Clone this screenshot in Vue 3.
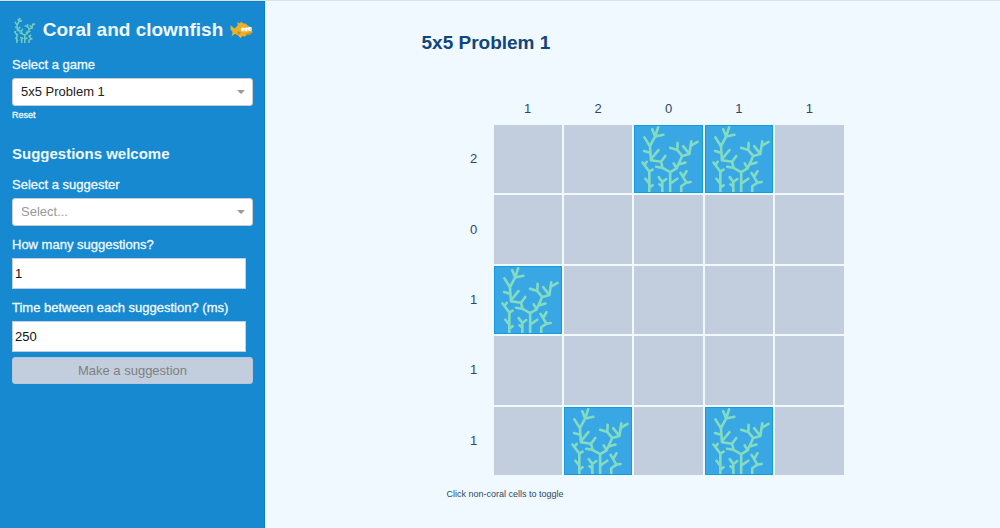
<script setup>
import { ref } from 'vue'

const games = ['5x5 Problem 1', '5x5 Problem 2']
const game = ref(games[0])
const suggester = ref('')
const count = ref('1')
const delay = ref('250')
const columnCounts = [1, 2, 0, 1, 1]
const rows = [
  { count: 2, cells: [0, 0, 1, 1, 0] },
  { count: 0, cells: [0, 0, 0, 0, 0] },
  { count: 1, cells: [1, 0, 0, 0, 0] },
  { count: 1, cells: [0, 0, 0, 0, 0] },
  { count: 1, cells: [0, 1, 0, 1, 0] },
]
const coral =
  'M209 123L206 80L189 53M206 80L222 50L213 28M222 50L231 22M222 50L247 45M206 100L188 95M209 120L232 92M209 123L240 128L253 110M240 128L245 147M225 143L243 146L268 160V224M268 160L288 148L305 110L290 92L268 85M290 92L291 70M305 110L327 104L308 80M327 104L333 65M330 80L352 67M294 136L315 130M288 148L279 133M268 195L290 180M204 224V158L183 130M189 138L196 128M204 158L214 152M204 195L192 180M204 208L214 200M244 224V190L233 175M244 190L256 181M244 204L235 197M302 224V203L318 192L300 162M309 173L318 157M318 192L331 190'
</script>

<template>
  <div class="page">
    <aside class="sidebar">
      <h1 class="brand">
        <svg class="brand-coral" viewBox="170 14 184 210" aria-hidden="true"><path :d="coral" /></svg>
        <span>Coral and clownfish</span>
        <svg class="fish" viewBox="0 0 44 34" aria-hidden="true">
          <path
            fill="#eab12c"
            d="M1 8L9 14L15 8L14 2L19 4L21 1L25 4L30 5L37 11L42 17L43 22L38 26L31 27L28 30L24 28L20 33L16 28L10 24L3 29L5 21L1 16Z"
          />
          <path fill="#c98f1d" d="M15 19L21 22L17 26L14 23ZM30 24L42 21L38 26L31 27Z" />
          <g fill="#fff"><circle cx="25" cy="16" r="4" /><circle cx="32" cy="16" r="4" /><circle cx="38" cy="15" r="4" /></g>
          <g fill="#8a7c50"><circle cx="27" cy="17" r="1" /><circle cx="34" cy="17" r="1" /><circle cx="40" cy="15" r="1" /></g>
        </svg>
      </h1>

      <label class="label" for="game">Select a game</label>
      <div class="picker">
        <select id="game" v-model="game">
          <option v-for="g in games" :key="g">{{ g }}</option>
        </select>
      </div>
      <button class="reset" type="button">Reset</button>

      <h2 class="section">Suggestions welcome</h2>
      <label class="label" for="suggester">Select a suggester</label>
      <div class="picker">
        <select id="suggester" v-model="suggester" class="empty">
          <option value="">Select...</option>
        </select>
      </div>
      <label class="label spaced" for="count">How many suggestions?</label>
      <input id="count" v-model="count" class="field" type="text" inputmode="numeric" />
      <label class="label spaced" for="delay">Time between each suggestion? (ms)</label>
      <input id="delay" v-model="delay" class="field" type="text" inputmode="numeric" />
      <button class="suggest" type="button" disabled>Make a suggestion</button>
    </aside>

    <main class="main">
      <div class="problem">
        <h2 class="title">5x5 Problem 1</h2>
        <div class="board">
          <span class="count"></span>
          <span v-for="(n, i) in columnCounts" :key="i" class="count top">{{ n }}</span>
          <template v-for="(row, r) in rows" :key="r">
            <span class="count">{{ row.count }}</span>
            <template v-for="(cell, c) in row.cells" :key="c">
              <div v-if="cell" class="cell coral" role="img" aria-label="Coral">
                <svg viewBox="160 18 204 204"><path :d="coral" /></svg>
              </div>
              <button v-else class="cell" type="button" aria-label="Empty cell"></button>
            </template>
          </template>
        </div>
        <p class="hint">Click non-coral cells to toggle</p>
      </div>
    </main>
  </div>
</template>

<style>
body {
  background: #f0f9ff;
}
</style>

<style scoped>
.page {
  box-sizing: border-box;
  display: flex;
  min-height: 100vh;
  border-top: 1px solid #dde1e4;
  background: #f0f9ff;
  color: #124580;
  font-family: "Liberation Sans", Arial, sans-serif;
}
.page * {
  box-sizing: border-box;
}
.sidebar {
  display: flex;
  flex-direction: column;
  align-items: stretch;
  flex: 0 0 265px;
  padding: 12px 11px 12px 12px;
  border: 1px solid #0a7fd4;
  border-width: 1px 1px 0 0;
  background: #1789d0;
  color: #f0f9ff;
}
.brand {
  display: flex;
  align-items: center;
  justify-content: space-between;
  height: 32px;
  margin: 0 0 8px;
  font-size: 19px;
  line-height: 24px;
  white-space: nowrap;
}
.brand-coral {
  width: 24px;
  height: 26px;
}
.brand-coral path {
  fill: none;
  stroke: #73cdbf;
  stroke-width: 12;
}
.fish {
  width: 23px;
  height: 18px;
}
.label {
  height: 24px;
  font-size: 13px;
  line-height: 22px;
  -webkit-text-stroke: 0.3px #f0f9ff;
}
.spaced {
  margin-top: 8px;
}
.picker {
  position: relative;
  width: 100%;
}
.picker::after {
  content: "";
  position: absolute;
  right: 8px;
  top: 12px;
  border: 4px solid transparent;
  border-top-color: #999;
  pointer-events: none;
}
.picker select {
  display: block;
  width: 100%;
  height: 28px;
  padding: 0 8px;
  appearance: none;
  border: 1px solid #ccc;
  border-radius: 3px;
  background: #fff;
  color: #222;
  font: 13px/26px "Liberation Sans", Arial, sans-serif;
}
.picker .empty {
  color: #999;
}
.reset {
  align-self: flex-start;
  padding: 0;
  border: 0;
  background: none;
  color: #f0f9ff;
  font: 9px/18px "Liberation Sans", Arial, sans-serif;
  -webkit-text-stroke: 0.3px #f0f9ff;
}
.section {
  margin: 20px 0 10px;
  font-size: 15px;
  line-height: 20px;
}
.field {
  width: 234px;
  height: 31px;
  padding: 0 2px;
  border: 1px solid #c2cdde;
  border-radius: 0;
  background: #fff;
  color: #111;
  font: 13px "Liberation Sans", Arial, sans-serif;
}
.suggest {
  height: 27px;
  margin-top: 5px;
  padding: 0;
  border: 1px solid #b7c7dc;
  border-radius: 3px;
  background: #c2cdde;
  color: #808080;
  font: 13px "Liberation Sans", Arial, sans-serif;
}
.main {
  flex: 1;
  display: flex;
  justify-content: center;
}
.problem {
  width: 422px;
}
.title {
  margin: 30px 0 40px;
  font-size: 19px;
  line-height: 24px;
}
.board {
  display: grid;
  grid-template-columns: 40px repeat(5, 1fr);
  gap: 2px;
  margin-left: 30px;
  color: #2f4668;
}
.count {
  align-self: center;
  padding-left: 4px;
  font-size: 13px;
  line-height: 16px;
  text-align: center;
}
.top {
  padding: 6px 0;
}
.cell {
  width: 100%;
  aspect-ratio: 1;
  padding: 0;
  border: 0;
  background: #c2cdde;
}
.coral {
  border: 1px solid #149ce3;
  background: #3aa7e5;
}
.coral svg {
  display: block;
  width: 100%;
  height: 100%;
}
.coral path {
  fill: none;
  stroke: #83dcc0;
  stroke-width: 8;
  stroke-linecap: round;
  stroke-linejoin: round;
}
.hint {
  margin: 12px 0 0 25px;
  color: #2f4668;
  font-size: 9px;
  line-height: 14px;
}
</style>
